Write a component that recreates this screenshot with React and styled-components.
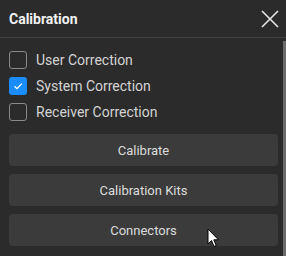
import React, { useState } from 'react';
import styled, { createGlobalStyle } from 'styled-components';

const Global = createGlobalStyle`
  html, body {
    margin: 0;
    padding: 0;
    background: #2b2b2b;
  }
  body {
    font-family: Roboto, "Noto Sans", sans-serif;
  }
`;

const Panel = styled.div`
  width: 286px;
  height: 256px;
  background: #2b2b2b;
  display: flex;
  flex-direction: column;
  overflow: hidden;
  position: relative;
`;

const Header = styled.div`
  height: 37px;
  display: flex;
  align-items: center;
  justify-content: space-between;
  padding: 0 4px 0 9px;
  border-bottom: 1px solid #404040;
  flex-shrink: 0;
`;

const Title = styled.div`
  color: #f2f2f2;
  font-size: 14px;
  font-weight: 700;
`;

const CloseButton = styled.button`
  width: 24px;
  height: 24px;
  padding: 0;
  border: none;
  background: transparent;
  display: flex;
  align-items: center;
  justify-content: center;
`;

const Body = styled.div`
  flex: 1;
  display: flex;
  padding: 13px 8px 0 9px;
`;

const Content = styled.div`
  flex: 1;
  display: flex;
  flex-direction: column;
`;

const Scrollbar = styled.div`
  position: absolute;
  right: 0;
  top: 41px;
  bottom: 0;
  width: 3px;
  background: #6b6b6b;
`;

const Options = styled.div`
  display: flex;
  flex-direction: column;
  gap: 8px;
  margin-bottom: 13px;
`;

const Option = styled.label`
  display: flex;
  align-items: center;
  gap: 9px;
  height: 18px;
  color: #d4d4d4;
  font-size: 14px;
  cursor: default;
`;

const Box = styled.span`
  width: 18px;
  height: 18px;
  box-sizing: border-box;
  border-radius: 3px;
  border: ${({ $checked }) => ($checked ? 'none' : '1.5px solid #8a8a8a')};
  background: ${({ $checked }) => ($checked ? '#1a8cff' : 'transparent')};
  display: flex;
  align-items: center;
  justify-content: center;
`;

const Buttons = styled.div`
  display: flex;
  flex-direction: column;
  gap: 8px;
`;

const Button = styled.button`
  height: 32px;
  border: none;
  border-radius: 4px;
  background: #3b3b3b;
  color: #dcdcdc;
  font-family: Roboto, "Noto Sans", sans-serif;
  font-size: 13px;
  position: relative;
`;

const Cursor = styled.svg`
  position: absolute;
  left: 198px;
  top: 14px;
`;

const options = [
  { label: 'User Correction', checked: false },
  { label: 'System Correction', checked: true },
  { label: 'Receiver Correction', checked: false },
];

export default function App() {
  const [state, setState] = useState(options);

  const toggle = (i) =>
    setState((s) => s.map((o, j) => (j === i ? { ...o, checked: !o.checked } : o)));

  return (
    <Panel>
      <Global />
      <Header>
        <Title>Calibration</Title>
        <CloseButton>
          <svg width="20" height="20" viewBox="0 0 20 20">
            <path d="M2 2L18 18M18 2L2 18" stroke="#e8e8e8" strokeWidth="1.6" />
          </svg>
        </CloseButton>
      </Header>
      <Body>
        <Content>
          <Options>
            {state.map((o, i) => (
              <Option key={o.label} onClick={() => toggle(i)}>
                <Box $checked={o.checked}>
                  {o.checked && (
                    <svg width="12" height="12" viewBox="0 0 12 12">
                      <path d="M2.5 6.2L5 8.6L9.8 3.6" fill="none" stroke="#fff" strokeWidth="1.3" />
                    </svg>
                  )}
                </Box>
                {o.label}
              </Option>
            ))}
          </Options>
          <Buttons>
            <Button>Calibrate</Button>
            <Button>Calibration Kits</Button>
            <Button>
              Connectors
              <Cursor width="13" height="20" viewBox="0 0 13 20">
                <path d="M1 1L1 16L4.5 12.5L7 18.5L9.2 17.5L6.8 11.8L11.5 11.8Z" fill="#fff" stroke="#000" strokeWidth="1" />
              </Cursor>
            </Button>
          </Buttons>
        </Content>
      </Body>
      <Scrollbar />
    </Panel>
  );
}
